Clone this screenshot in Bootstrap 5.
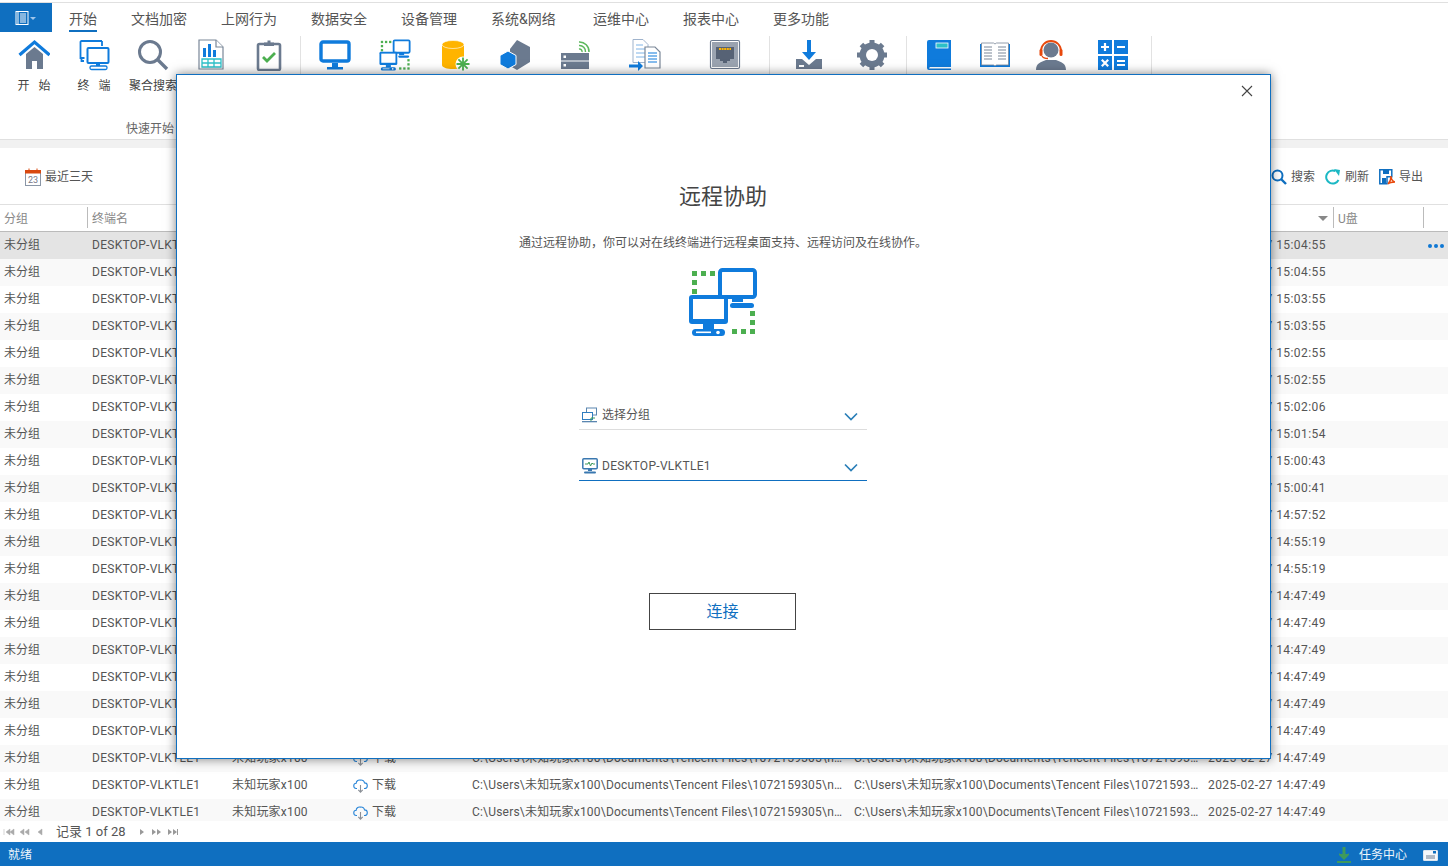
<!DOCTYPE html>
<html lang="zh-CN">
<head>
<meta charset="utf-8">
<title>远程协助</title>
<link href="https://cdn.jsdelivr.net/npm/bootstrap@5.3.0/dist/css/bootstrap.min.css" rel="stylesheet">
<style>
html,body{height:866px;overflow:hidden}
body{font-family:"Roboto","Noto Sans CJK SC",sans-serif;font-size:12px;color:#555;background:#fff}
.shell{height:866px;position:relative}
.topline{height:3px;border-bottom:1px solid #e0e0e0}
.tabbar{height:29px}
.appbtn{width:52px;background:#0f6fc0}
.tabs{gap:34px;padding-left:17px;font-size:14px;color:#555}
.tabitem{height:29px;line-height:32px}
.tabitem.on{border-bottom:2px solid #0f6fc0;height:29px}
.tabwide{min-width:68px}
.ribbon{height:108px;border-bottom:1px solid #e0e0e0}
.rgroup{height:100%;position:relative}
.rsep{width:1px;height:102px;background:#e2e2e2;margin-top:4px;flex:none}
.sg2{margin-left:2px}
.sg5{margin-left:5px}
.ritem{flex:none;text-align:center;padding-top:7px;color:#444}
.ritem svg{display:block;margin:0 auto;width:32px;height:32px}
.ritem span{display:block;margin-top:6px;line-height:18px}
.w56{width:56px}.w58{width:58px}.w60{width:60px}.w68{width:68px}.w69{width:69px}.w80{width:80px}
.rlabel{position:absolute;left:0;right:2px;bottom:1px;text-align:center;line-height:18px;color:#666}
.band{height:8px;background:#f1f1f1}
.toolbar{height:57px;border-bottom:1px solid #e0e0e0;padding:1px 25px 0 25px}
.tools{gap:10px}
.tool{gap:4px;color:#555}
.grid-wrap{height:616px;overflow:hidden}
.grid-table{table-layout:fixed;width:1448px;margin:0;border-collapse:separate;border-spacing:0}
.grid-table th,.grid-table td{padding:0 4px;border:0;height:27px;line-height:27px;font-size:12px;font-weight:400;color:#555;background:transparent;box-shadow:none;white-space:nowrap;overflow:hidden;text-overflow:ellipsis}
.grid-table thead th{color:#888;padding-top:2px;line-height:24px;border-bottom:1px solid #bbb;position:relative}
.hdiv{position:absolute;right:0;top:2px;bottom:3px;width:1px;background:#bbb}
.grid-table tbody tr:nth-child(even) td{background:#f9f9f9}
.grid-table tbody tr.sel td{background:#e4e4e4}
.c1{width:88px}.c2{width:140px}.c3{width:121px}.c4{width:119px}.c5{width:382px}.c6{width:354px}.c7{width:130px}.c8{width:90px}.c9{width:24px}
.grid-table td.ls-name{letter-spacing:.27px}
.grid-table td.ls-user{letter-spacing:.2px}
.grid-table td.ls-path{letter-spacing:.2px}
.grid-table td.ls-time{letter-spacing:.42px}
.sorttri{position:absolute;right:6px;top:11px;width:0;height:0;border-left:5px solid transparent;border-right:5px solid transparent;border-top:5px solid #888}
.dots{display:flex;gap:2px;align-items:center;height:27px}
.dots i{width:4px;height:4px;border-radius:50%;background:#0f78d4;display:block}
.dl{display:inline-flex;align-items:center;gap:4px;vertical-align:top;height:27px}
.pager{height:21px;padding-left:3px;color:#555;font-size:13px}
.pg-text{margin:0 14px 0 6px}
.statusbar{height:24px;background:#0f6fc0;color:#eef5fb;padding:2px 10px 0 8px}
.dlg{position:absolute;left:176px;top:74px;width:1095px;height:685px;background:#fff;border:1px solid #0f6fc0;box-shadow:0 0 10px rgba(0,0,0,.5);padding-right:1px}
.dlg-close{position:absolute;right:17px;top:10px;width:12px;height:12px;padding:0;border:0;background:none;line-height:0}
.dlg-title{font-size:22px;line-height:30px;color:#444;margin:107px 0 0;font-weight:400}
.dlg-sub{line-height:18px;color:#555;margin:22px 0 0;font-size:12px}
.bigicon{width:70px;height:70px;margin-top:15px;display:block}
.picker{width:288px;height:30px;border-bottom:1px solid #ddd;padding:0 9px 0 3px;color:#555;gap:4px}
.picker.first{margin-top:63px}
.picker.second{margin-top:21px;border-bottom-color:#0f6fc0}
.picker .lat{letter-spacing:.3px}
.chev{margin-top:3px}
.connect{width:147px;height:37px;margin:112px 1px 0 0;border:1px solid #444;border-radius:0;background:#fff;color:#0f6fc0;font-size:16px;padding:0;line-height:35px}
.connect:hover{background:#fff;color:#0f6fc0;border-color:#444}
</style>
</head>
<body>
<svg width="0" height="0" class="position-absolute">
<defs>
<symbol id="remote" viewBox="0 0 70 70">
<g fill="#4caf50"><rect x="4" y="4" width="5" height="5"/><rect x="13" y="4" width="5" height="5"/><rect x="22" y="4" width="5" height="5"/><rect x="4" y="13" width="5" height="5"/><rect x="4" y="22" width="5" height="5"/><rect x="44" y="62" width="5" height="5"/><rect x="53" y="62" width="5" height="5"/><rect x="62" y="62" width="5" height="5"/><rect x="62" y="44" width="5" height="5"/><rect x="62" y="53" width="5" height="5"/></g>
<g fill="#0f7bdc"><rect x="44" y="29" width="11" height="6"/><rect x="42" y="36" width="24" height="5" rx="2.5"/></g>
<rect x="32" y="3" width="35" height="27" rx="2.5" fill="#fff" stroke="#0f7bdc" stroke-width="4"/>
<rect x="1" y="28" width="39" height="29" rx="3" fill="#0f7bdc"/><rect x="5" y="32" width="31" height="20" fill="#fff"/>
<rect x="15" y="57" width="11" height="5" fill="#0f7bdc"/><rect x="4" y="62" width="33" height="7" rx="3.5" fill="#0f7bdc"/><rect x="8" y="64.5" width="15" height="1.6" fill="#fff"/><circle cx="30" cy="65.5" r="1.8" fill="#fff"/>
</symbol>
<symbol id="cloud" viewBox="0 0 14 16">
<path d="M3.5 10.5H3A2.6 2.6 0 0 1 2.700 5.300 3.200 3.200 0 0 1 6.700 2.100 3.400 3.400 0 0 1 11 4.900 2.800 2.800 0 0 1 11 10.500h-.5" fill="none" stroke="#2a86d8" stroke-width="1.100"/>
<path d="M7 7v7M4.800 11.800 7 14.200l2.200-2.400" fill="none" stroke="#8a8f96" stroke-width="1.100"/>
</symbol>
</defs>
</svg>
<div class="shell d-flex flex-column">
  <div class="topline"></div>
  <div class="tabbar d-flex">
    <div class="appbtn d-flex align-items-center justify-content-center">
      <svg width="22" height="14" viewBox="0 0 22 14"><rect x="1" y=".5" width="12" height="13" fill="none" stroke="#fff"/><path d="M3 .5v13M5 3h6M5 5h6M5 7h6M5 9h6M5 11h6" stroke="#fff" fill="none"/><path d="M15 6h6l-3 3z" fill="#9fc5ea"/></svg>
    </div>
    <div class="tabs d-flex">
      <div class="tabitem on">开始</div><div class="tabitem">文档加密</div><div class="tabitem">上网行为</div><div class="tabitem">数据安全</div><div class="tabitem">设备管理</div><div class="tabitem tabwide">系统&amp;网络</div><div class="tabitem">运维中心</div><div class="tabitem">报表中心</div><div class="tabitem">更多功能</div>
    </div>
  </div>
  <div class="ribbon d-flex ps-1">
    <div class="rgroup d-flex">
      <div class="ritem w60"><svg viewBox="0 0 32 32"><path d="M8 15v15h6v-8h5v8h6V15L16.500 8z" fill="#6b7a8f"/><path d="M1.500 16 16.500 3l15 13" fill="none" stroke="#0f7bdc" stroke-width="3.200"/></svg><span>开&nbsp;&nbsp;&nbsp;始</span></div>
      <div class="ritem w60"><svg viewBox="0 0 32 32"><path d="M24 2H3.500a1 1 0 0 0-1 1v16h4" fill="none" stroke="#0f7bdc" stroke-width="1.800"/><path d="M24 2v5" stroke="#0f7bdc" stroke-width="1.800"/><path d="M6 22H3.500v-3" fill="none" stroke="#0f7bdc" stroke-width="1.800"/><rect x="9.500" y="9" width="21" height="15" rx="1" fill="#fff" stroke="#0f7bdc" stroke-width="2"/><rect x="18" y="24" width="4" height="3" fill="#0f7bdc"/><rect x="12" y="27" width="17" height="3.500" rx="1.500" fill="none" stroke="#0f7bdc" stroke-width="1.300"/></svg><span>终&nbsp;&nbsp;&nbsp;端</span></div>
      <div class="ritem w58"><svg viewBox="0 0 32 32"><circle cx="13" cy="13" r="10.500" fill="none" stroke="#6b7a8f" stroke-width="3"/><path d="M21 21l9 9" stroke="#6b7a8f" stroke-width="3.400"/></svg><span class="text-nowrap">聚合搜索</span></div>
      <div class="ritem w58"><svg viewBox="0 0 32 32"><path d="M4 1h17l7 7v22H4z" fill="#fff" stroke="#7a8798" stroke-width="1.200"/><path d="M21 1v7h7" fill="#fff" stroke="#7a8798" stroke-width="1.200"/><path d="M8 9h3v9H8zM13 5h3v13h-3zM18 11h3v7h-3z" fill="#0f7bdc"/><path d="M7 20h19v8H7zM7 24h19M13 20v8M19 20v8" fill="none" stroke="#2cc0c8" stroke-width="1.300"/></svg></div>
      <div class="ritem w58"><svg viewBox="0 0 32 32"><rect x="5" y="5" width="22" height="26" rx="1.500" fill="#fff" stroke="#6b7a8f" stroke-width="2.600"/><path d="M11 7V3.500h3.500V1.500h3v2H21V7z" fill="#6b7a8f"/><path d="M10 18l4 4 8-8" fill="none" stroke="#4caf50" stroke-width="2.800"/></svg></div>
      <div class="rlabel">快速开始</div>
    </div>
    <div class="rsep sg2 me-1"></div>
    <div class="rgroup d-flex">
      <div class="ritem w60"><svg viewBox="0 0 32 32"><rect x="2" y="3" width="28" height="19" rx="2" fill="#fff" stroke="#0f7bdc" stroke-width="3.400"/><rect x="13" y="24" width="6" height="4" fill="#0f7bdc"/><rect x="8" y="28" width="16" height="2.500" fill="#0f7bdc"/></svg></div>
      <div class="ritem w60"><svg viewBox="0 0 70 70"><use href="#remote"/></svg></div>
      <div class="ritem w60"><svg viewBox="0 0 32 32"><path d="M3 6v20c0 2.500 5 4 11 4 6 0 11-1.500 11-4V6z" fill="#ffb400"/><ellipse cx="14" cy="5.500" rx="11" ry="4" fill="#ffb400" stroke="#fff" stroke-width=".6"/><circle cx="24" cy="25" r="7.500" fill="#fff"/><path d="M24 18.500v13M17.500 25h13M19.400 20.400l9.200 9.200M28.600 20.400l-9.200 9.200" stroke="#4caf50" stroke-width="1.800"/></svg></div>
      <div class="ritem w60"><svg viewBox="0 0 32 32"><path d="M18 1l13 7v15l-13 8-7-4V10z" fill="#6b7a8f"/><path d="M9 12l8 4.500v9L9 30l-8-4.500v-9z" fill="#0f7bdc" stroke="#fff" stroke-width="1"/></svg></div>
      <div class="ritem w60"><svg viewBox="0 0 32 32"><rect x="2" y="14" width="28" height="7.500" fill="#6b7a8f"/><rect x="2" y="22.500" width="28" height="7.500" fill="#6b7a8f"/><rect x="4.500" y="16.500" width="2.500" height="2.500" fill="#fff"/><rect x="4.500" y="25" width="2.500" height="2.500" fill="#fff"/><path d="M21 10A2.500 2.500 0 0 1 24 13M21 6.500A6 6 0 0 1 27.500 13M21 3A9.500 9.500 0 0 1 31 13" transform="translate(-1 0)" fill="none" stroke="#5cb85c" stroke-width="1.500"/></svg></div>
      <div class="ritem w80"><svg viewBox="0 0 32 32"><path d="M4 .5h10l5 5v18H4z" fill="#fff" stroke="#9fb3cc"/><path d="M7 6h7M7 10h9M7 14h9M7 18h9" stroke="#7fb3e6"/><path d="M16 8h10l5 5v16H16z" fill="#fff" stroke="#7a8798" stroke-width="1.200"/><path d="M19 14h9M19 17h9M19 20h9M19 23h9" stroke="#0f7bdc" stroke-width="1.200"/><path d="M0 25.500h9V22l5 5-5 5v-3.500H0z" fill="#0f7bdc"/></svg></div>
      <div class="ritem w80"><svg viewBox="0 0 32 32"><rect x="1.500" y="1.500" width="29" height="28" rx="1.500" fill="#fff" stroke="#6b7a8f" stroke-width="1.200"/><rect x="3" y="3" width="26" height="25" fill="#9aa3b0"/><path d="M7 8h18v12h-4v2h-3v2h-4v-2h-3v-2H7z" fill="#566275"/><path d="M10 10h12" stroke="#ffb400" stroke-width="2" stroke-dasharray="2 .6"/></svg></div>
    </div>
    <div class="rsep ms-1 me-1"></div>
    <div class="rgroup d-flex">
      <div class="ritem w69"><svg viewBox="0 0 32 32"><path d="M14 1h4v12h5l-7 8-7-8h5z" fill="#0f7bdc"/><path d="M3 20h6l7 6 7-6h6v10H3z" fill="#6b7a8f"/><rect x="6" y="26" width="5" height="2" fill="#fff"/></svg></div>
      <div class="ritem w58"><svg viewBox="0 0 32 32"><circle cx="16" cy="16" r="9.500" fill="none" stroke="#6b7a8f" stroke-width="6"/><path d="M16 1v30M1 16h30M5.400 5.400l21.200 21.200M26.600 5.400 5.400 26.600" stroke="#6b7a8f" stroke-width="5"/><circle cx="16" cy="16" r="6" fill="#fff"/></svg></div>
    </div>
    <div class="rsep sg5 me-1"></div>
    <div class="rgroup d-flex">
      <div class="ritem w56"><svg viewBox="0 0 32 32"><path d="M4 3a2 2 0 0 1 2-2h22v27H7a3 3 0 0 0-1 1.500h22V31H6a2 2 0 0 1-2-2z" fill="#0f7bdc"/><rect x="13" y="4" width="12" height="5" fill="#2cc0c8" stroke="#fff" stroke-width=".8"/></svg></div>
      <div class="ritem w56"><svg viewBox="0 0 32 32"><path d="M1 5h30v23H1z" fill="#0f7bdc"/><path d="M2.500 4h12l1.500 1 1.500-1h12v22h-12L16 27l-1.500-1h-12z" fill="#fff" stroke="#7a8798" stroke-width=".8"/><path d="M5 8h8M5 11h8M5 14h8M5 17h8M5 20h8M19 8h8M19 11h8M19 14h8M19 17h8M19 20h8" stroke="#7a8798"/></svg></div>
      <div class="ritem w56"><svg viewBox="0 0 32 32"><circle cx="16" cy="11" r="7.500" fill="#6b7a8f"/><path d="M1 31c0-7 5-8 10-10h10c5 2 10 3 10 10z" fill="#6b7a8f"/><path d="M6 12a10 10 0 0 1 20 0" fill="none" stroke="#e8480c" stroke-width="1.800"/><rect x="4.500" y="10" width="3" height="7" rx="1.500" fill="#e8480c"/><rect x="24.500" y="10" width="3" height="7" rx="1.500" fill="#e8480c"/><path d="M7 17c1 2 4 2.500 6 2.500" fill="none" stroke="#e8480c" stroke-width="1.300"/></svg></div>
      <div class="ritem w68"><svg viewBox="0 0 32 32"><rect x="1" y="1" width="14" height="14" fill="#0f7bdc"/><rect x="17" y="1" width="14" height="14" fill="#0f7bdc"/><rect x="1" y="17" width="14" height="14" fill="#0f7bdc"/><rect x="17" y="17" width="14" height="14" fill="#0f7bdc"/><path d="M4 8h8M8 4v8M20 8h8M20 22h8M20 26h8M4.800 20.800l6.400 6.400M11.200 20.800l-6.400 6.400" stroke="#fff" stroke-width="2.200"/></svg></div>
    </div>
    <div class="rsep ms-1"></div>
  </div>
  <div class="band"></div>
  <div class="toolbar d-flex align-items-center justify-content-between">
    <div class="tool d-flex align-items-center">
      <svg width="16" height="18" viewBox="0 0 16 18"><rect x=".5" y="2.500" width="15" height="15" fill="#fff" stroke="#8a96a6"/><rect x="0" y="2" width="16" height="3.500" fill="#d9480f"/><path d="M4 .5v3M12 .5v3" stroke="#d9480f"/><text x="8" y="15" text-anchor="middle" font-size="9" fill="#778">23</text></svg>
      <span>最近三天</span>
    </div>
    <div class="tools d-flex align-items-center">
      <div class="tool d-flex align-items-center"><svg width="16" height="16" viewBox="0 0 16 16"><circle cx="6.500" cy="6.500" r="5" fill="none" stroke="#0f6fc0" stroke-width="2"/><path d="M10 10l5 5" stroke="#0f6fc0" stroke-width="2.400"/></svg><span>搜索</span></div>
      <div class="tool d-flex align-items-center"><svg width="16" height="16" viewBox="0 0 16 16"><path d="M13.500 11A6.500 6.500 0 1 1 10.500 2.200" fill="none" stroke="#1bb8c4" stroke-width="2"/><path d="M9 0l6 1-1 6z" fill="#1bb8c4"/></svg><span>刷新</span></div>
      <div class="tool d-flex align-items-center"><svg width="16" height="16" viewBox="0 0 16 16"><path d="M.8.800h12v7H8v7H.8z" fill="#fff" stroke="#0f6fc0" stroke-width="1.500"/><rect x="4" y="1" width="6" height="4" fill="#0f6fc0"/><rect x="3" y="9" width="4" height="5" fill="#0f6fc0"/><path d="M9 15c2-2 3-5 3-8 0 3 1 5 4 6-2 0-5 0-7 2z" fill="none" stroke="#e8480c" stroke-width="1.400"/></svg><span>导出</span></div>
    </div>
  </div>
  <div class="grid-wrap">
    <table class="table grid-table">
      <colgroup><col class="c1"><col class="c2"><col class="c3"><col class="c4"><col class="c5"><col class="c6"><col class="c7"><col class="c8"><col class="c9"></colgroup>
      <thead><tr><th>分组<i class="hdiv"></i></th><th>终端名</th><th></th><th></th><th></th><th></th><th><i class="sorttri"></i><i class="hdiv"></i></th><th>U盘<i class="hdiv"></i></th><th></th></tr></thead>
      <tbody id="rows"></tbody>
    </table>
  </div>
  <div class="pager d-flex align-items-center">
    <svg width="47" height="8" viewBox="0 0 47 8"><path d="M1 1v6M7 1 3 4l4 3zM11 1 7 4l4 3zM21 1l-4 3 4 3zM26 1l-4 3 4 3zM39 1l-4 3 4 3z" fill="#aaa" stroke="#aaa" stroke-width=".5"/></svg>
    <span class="pg-text">记录 1 of 28</span>
    <svg width="38" height="8" viewBox="0 0 38 8"><path d="M0 1l4 3-4 3zM12 1l4 3-4 3zM17 1l4 3-4 3zM28 1l4 3-4 3zM33 1l4 3-4 3z" fill="#999"/><path d="M37.500 1v6" stroke="#999"/></svg>
  </div>
  <div class="statusbar d-flex align-items-center justify-content-between">
    <span>就绪</span>
    <div class="d-flex align-items-center">
      <svg width="14" height="16" viewBox="0 0 14 16" class="me-2"><path d="M5.500 0h3v7h2.500l1-1v2l-5 5-5-5V6l1 1h2.500z" fill="#3f9a5c"/><rect x="0" y="14" width="14" height="2" fill="#3f9a5c"/></svg>
      <span>任务中心</span>
      <svg width="15" height="11" viewBox="0 0 15 11" class="ms-3"><rect x=".5" y=".5" width="14" height="10" rx=".5" fill="#f4f7fa" stroke="#dce6f0"/><rect x="10" y="1" width="3" height="2.500" fill="#0f6fc0"/><path d="M3 6h9M3 8h9" stroke="#6b7a8f"/></svg>
    </div>
  </div>

  <div class="dlg d-flex flex-column align-items-center">
    <button class="dlg-close" type="button" aria-label="关闭"><svg width="12" height="12" viewBox="0 0 12 12"><path d="M1 1l10 10M11 1 1 11" stroke="#444" stroke-width="1.100"/></svg></button>
    <h2 class="dlg-title">远程协助</h2>
    <p class="dlg-sub">通过远程协助，你可以对在线终端进行远程桌面支持、远程访问及在线协作。</p>
    <svg class="bigicon" viewBox="0 0 70 70"><use href="#remote"/></svg>
    <div class="picker first d-flex align-items-center">
      <svg width="16" height="16" viewBox="0 0 16 16"><rect x="4.500" y="1" width="10" height="7" fill="#fff" stroke="#5a86b0"/><rect x=".5" y="5.500" width="10" height="7" fill="#fff" stroke="#2f7dc0"/><rect x="0" y="14" width="15" height="1.300" fill="#5a86b0"/><path d="M9 14v-3h4" fill="none" stroke="#3f9a5c"/></svg>
      <span class="flex-grow-1">选择分组</span>
      <svg class="chev" width="14" height="9" viewBox="0 0 14 9"><path d="M1 1.500l6 6 6-6" fill="none" stroke="#2a7fb8" stroke-width="1.700"/></svg>
    </div>
    <div class="picker second d-flex align-items-center">
      <svg width="16" height="16" viewBox="0 0 16 16"><rect x=".8" y=".8" width="14.400" height="10" rx="1" fill="#fff" stroke="#3a78b0" stroke-width="1.500"/><path d="M3 6h3l1-2 1.500 4L10 5l1 1h2" fill="none" stroke="#3f9a5c"/><rect x="6" y="11" width="4" height="2" fill="#3a78b0"/><rect x="2" y="13.500" width="12" height="2" rx="1" fill="#3a78b0"/></svg>
      <span class="flex-grow-1 lat">DESKTOP-VLKTLE1</span>
      <svg class="chev" width="14" height="9" viewBox="0 0 14 9"><path d="M1 1.500l6 6 6-6" fill="none" stroke="#2a7fb8" stroke-width="1.700"/></svg>
    </div>
    <button class="btn connect" type="button">连接</button>
  </div>
</div>
<script>
var times=["15:04:55","15:04:55","15:03:55","15:03:55","15:02:55","15:02:55","15:02:06","15:01:54","15:00:43","15:00:41","14:57:52","14:55:19","14:55:19"];
for(var i=0;i<9;i++)times.push("14:47:49");
var p="C:\\Users\\未知玩家x100\\Documents\\Tencent Files\\1072159305\\nt_qq\\nt_data\\File\\report.docx";
document.getElementById("rows").innerHTML=times.map(function(t,i){
 return '<tr'+(i==0?' class="sel"':'')+'><td>未分组</td><td class="ls-name">DESKTOP-VLKTLE1</td><td class="ls-user">未知玩家x100</td><td><span class="dl"><svg width="15" height="16"><use href="#cloud"/></svg>下载</span></td><td class="ls-path">'+p+'</td><td class="ls-path">'+p+'</td><td class="ls-time">2025-02-27 '+t+'</td><td></td><td>'+(i==0?'<div class="dots"><i></i><i></i><i></i></div>':'')+'</td></tr>';
}).join("");
</script>
<script src="https://cdn.jsdelivr.net/npm/bootstrap@5.3.0/dist/js/bootstrap.bundle.min.js"></script>
</body>
</html>
